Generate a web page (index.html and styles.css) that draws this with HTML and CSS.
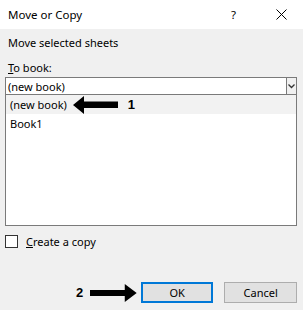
FILE: index.html
```html
<html lang="en">
<head>
    <meta charset="UTF-8">
    <title>Move or Copy</title>
    <link rel="stylesheet" href="styles.css">
</head>
<body>
    <div class="dialog">
        <div class="titlebar">
            <span class="title">Move or Copy</span>
            <span class="help">?</span>
            <svg class="close" width="11" height="11" viewBox="0 0 11 11">
                <path d="M0.5 0.5 L10.5 10.5 M10.5 0.5 L0.5 10.5" stroke="#000" stroke-width="1" fill="none"/>
            </svg>
        </div>

        <div class="content">
            <div class="heading">Move selected sheets</div>

            <label class="field-label"><u>T</u>o book:</label>
            <div class="combo">
                <span class="combo-value">(new book)</span>
                <span class="combo-btn">
                    <svg width="7" height="5" viewBox="0 0 7 5">
                        <path d="M0.5 0.5 L3.5 3.5 L6.5 0.5" stroke="#333" stroke-width="1.3" fill="none"/>
                    </svg>
                </span>
            </div>
            <div class="list">
                <div class="list-item selected">
                    <span>(new book)</span>
                    <svg class="arrow-left" width="45" height="18" viewBox="0 0 45 18">
                        <polygon points="0,9 11,0 11,5.5 45,5.5 45,12 11,12 11,18" fill="#000"/>
                    </svg>
                    <span class="step">1</span>
                </div>
                <div class="list-item">Book1</div>
            </div>

            <label class="check-row">
                <span class="checkbox"></span>
                <span><u>C</u>reate a copy</span>
            </label>

            <div class="buttons">
                <span class="step">2</span>
                <svg class="arrow-right" width="47" height="18" viewBox="0 0 47 18">
                    <polygon points="47,9 35,0 35,6 0,6 0,12 35,12 35,18" fill="#000"/>
                </svg>
                <button class="btn primary">OK</button>
                <button class="btn">Cancel</button>
            </div>
        </div>
    </div>
</body>
</html>
```

FILE: styles.css
```css
body {
    margin: 0;
    width: 303px;
    height: 310px;
    background: #f0f0f0;
    font-family: 'Noto Sans', 'Open Sans', sans-serif;
    font-size: 11px;
    color: #000;
    overflow: hidden;
}

.dialog {
    display: flex;
    flex-direction: column;
    height: 100%;
}

.titlebar {
    display: flex;
    align-items: center;
    height: 29px;
    padding-left: 8px;
    background: #fff;
}

.title {
    flex: 1;
    font-size: 11.5px;
}

.help {
    margin-right: 40px;
    font-size: 11.5px;
}

.close {
    margin-right: 16px;
}

.content {
    display: flex;
    flex-direction: column;
    padding: 6px 6px 0 5px;
}

.heading {
    padding-left: 3px;
    line-height: 16px;
}

.field-label {
    margin-top: 9px;
    padding-left: 3px;
    line-height: 16px;
}

.combo {
    display: flex;
    align-items: center;
    margin-top: 1px;
    height: 16px;
    border: 1px solid #7a7a7a;
    background: #fff;
}

.combo-value {
    flex: 1;
    padding-left: 2px;
}

.combo-btn {
    display: flex;
    align-items: center;
    justify-content: center;
    width: 9px;
    height: 16px;
    border-left: 1px solid #7a7a7a;
    background: #f0f0f0;
}

.list {
    height: 130px;
    border: 1px solid #7a7a7a;
    border-top: none;
    background: #fff;
}

.list-item {
    display: flex;
    align-items: center;
    height: 19px;
    padding-left: 4px;
}

.list-item.selected {
    background: #f2f2f2;
}

.arrow-left {
    margin-left: 6px;
}

.step {
    font-family: 'Liberation Sans', Arial, sans-serif;
    font-weight: bold;
    font-size: 13px;
}

.list-item .step {
    margin-left: 10px;
}

.check-row {
    display: flex;
    align-items: center;
    gap: 8px;
    margin-top: 8px;
}

.checkbox {
    width: 11px;
    height: 11px;
    border: 1px solid #333;
    background: #fff;
}

.buttons {
    display: flex;
    align-items: center;
    margin-top: 33px;
    padding-left: 71px;
}

.arrow-right {
    margin-left: 7px;
    margin-right: 4px;
}

.btn {
    width: 73px;
    height: 21px;
    padding: 0;
    border: 1px solid #adadad;
    background: #e1e1e1;
    font-family: 'Noto Sans', 'Open Sans', sans-serif;
    font-size: 11px;
    color: #000;
}

.btn.primary {
    border: 2px solid #0078d7;
    margin-right: 11px;
}
```
